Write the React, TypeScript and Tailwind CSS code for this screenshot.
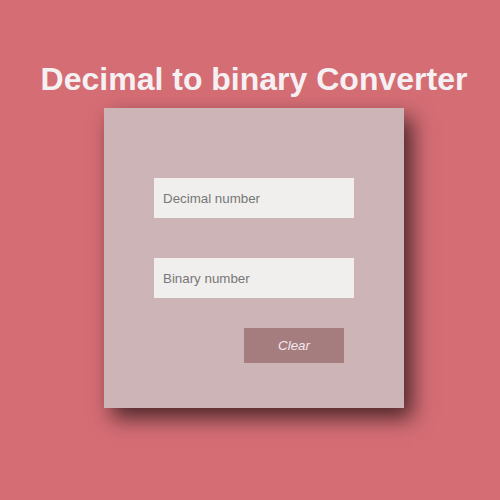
import React from "react";

export default function App() {
  return (
    <div
      className="w-[500px] h-[500px] bg-[#d56d75] flex flex-col items-center pl-[8px] pt-[61px]"
      style={{ fontFamily: '"Liberation Sans", Arial, sans-serif' }}
    >
      <h1 className="text-[32px] font-bold text-[#f5f1f3] leading-[37px] whitespace-nowrap">
        Decimal to binary Converter
      </h1>
      <div className="mt-[10px] w-[300px] h-[300px] bg-[#cdb5b7] shadow-[8px_10px_20px_rgba(0,0,0,0.65)] flex flex-col items-center pt-[70px]">
        <input
          placeholder="Decimal number"
          className="w-[200px] h-[40px] bg-[#f0efed] px-[9px] text-[13.33px] text-[#333] placeholder:text-[#777] outline-none"
        />
        <input
          placeholder="Binary number"
          className="mt-[40px] w-[200px] h-[40px] bg-[#f0efed] px-[9px] text-[13.33px] text-[#333] placeholder:text-[#777] outline-none"
        />
        <div className="w-[200px] flex justify-end mt-[30px]">
          <button className="w-[100px] h-[35px] mr-[10px] bg-[#a57d7e] text-[#f3e9f0] italic text-[13.33px]">
            Clear
          </button>
        </div>
      </div>
    </div>
  );
}
